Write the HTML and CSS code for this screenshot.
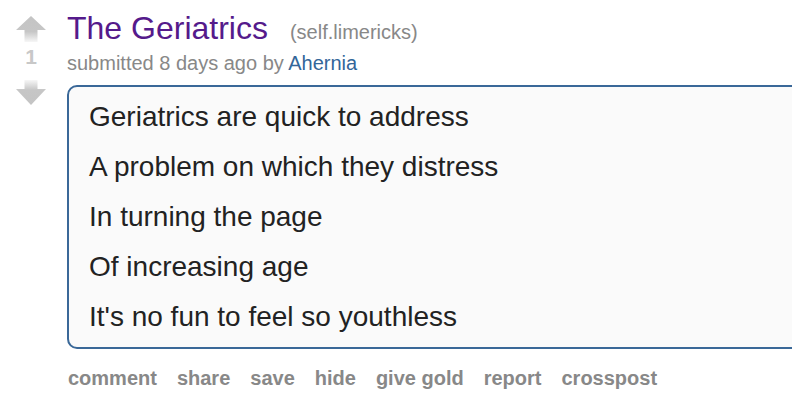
FILE: index.html
```html
<!DOCTYPE html>
<html>
<head>
<meta charset="utf-8">
<link rel="stylesheet" href="styles.css">
</head>
<body>
<div class="thing">
  <div class="midcol">
    <svg class="arrow up" width="32" height="26" viewBox="0 0 32 26">
      <defs>
        <linearGradient id="gu" x1="0" y1="0" x2="0" y2="1">
          <stop offset="0" stop-color="#c4c4c4"/>
          <stop offset="0.6" stop-color="#c6c6c6"/>
          <stop offset="1" stop-color="#c6c6c6" stop-opacity="0.15"/>
        </linearGradient>
      </defs>
      <path d="M16 0 L31 14 L22.5 14 L22.5 26 L9.5 26 L9.5 14 L1 14 Z" fill="url(#gu)"/>
    </svg>
    <div class="score">1</div>
    <svg class="arrow down" width="32" height="26" viewBox="0 0 32 26">
      <defs>
        <linearGradient id="gd" x1="0" y1="0" x2="0" y2="1">
          <stop offset="0" stop-color="#c6c6c6" stop-opacity="0.15"/>
          <stop offset="0.4" stop-color="#c6c6c6"/>
          <stop offset="1" stop-color="#c4c4c4"/>
        </linearGradient>
      </defs>
      <path d="M9.5 0 L22.5 0 L22.5 9 L31 9 L16 25 L1 9 L9.5 9 Z" fill="url(#gd)"/>
    </svg>
  </div>
  <div class="entry">
    <p class="title"><a class="title-link" href="#">The Geriatrics</a><span class="domain">(self.limericks)</span></p>
    <p class="tagline">submitted 8 days ago by <a class="author" href="#">Ahernia</a></p>
    <div class="usertext">
      <p>Geriatrics are quick to address</p>
      <p>A problem on which they distress</p>
      <p>In turning the page</p>
      <p>Of increasing age</p>
      <p>It's no fun to feel so youthless</p>
    </div>
    <ul class="buttons">
      <li>comment</li>
      <li>share</li>
      <li>save</li>
      <li>hide</li>
      <li>give gold</li>
      <li>report</li>
      <li>crosspost</li>
    </ul>
  </div>
</div>
</body>
</html>
```
FILE: styles.css
```css
html, body {
  margin: 0;
  padding: 0;
  background: #ffffff;
  overflow: hidden;
}

body {
  font-family: "Liberation Sans", Arial, Helvetica, sans-serif;
  width: 792px;
  height: 400px;
}

.thing {
  display: flex;
  align-items: flex-start;
  padding-left: 15px;
}

.midcol {
  width: 32px;
  margin-right: 20px;
  padding-top: 16px;
  display: flex;
  flex-direction: column;
  align-items: center;
}

.arrow {
  display: block;
}

.score {
  font-size: 21px;
  font-weight: bold;
  color: #c8c8c8;
  line-height: 24px;
  height: 24px;
  margin-top: 3px;
  margin-bottom: 11px;
}

.entry {
  flex: 1;
  min-width: 0;
  padding-top: 10px;
  margin-right: -30px;
}

.title {
  margin: 0;
  font-size: 32px;
  line-height: 36px;
  white-space: nowrap;
}

.title-link {
  color: #551a8b;
  text-decoration: none;
}

.domain {
  font-size: 20px;
  color: #888888;
  margin-left: 22px;
}

.tagline {
  margin: 1px 0 0 0;
  font-size: 20px;
  line-height: 24px;
  color: #888888;
}

.author {
  color: #336699;
  text-decoration: none;
}

.usertext {
  margin-top: 10px;
  border: 2px solid #3a6898;
  border-radius: 10px;
  background: #fafafa;
  padding: 14px 20px;
  color: #222222;
}

.usertext p {
  margin: 0 0 18px 0;
  font-size: 28px;
  line-height: 32px;
}

.usertext p:last-child {
  margin-bottom: 0;
}

.buttons {
  list-style: none;
  margin: 17px 0 0 1px;
  padding: 0;
  display: flex;
  gap: 20px;
  font-size: 20px;
  line-height: 24px;
  font-weight: bold;
  color: #888888;
}
```
